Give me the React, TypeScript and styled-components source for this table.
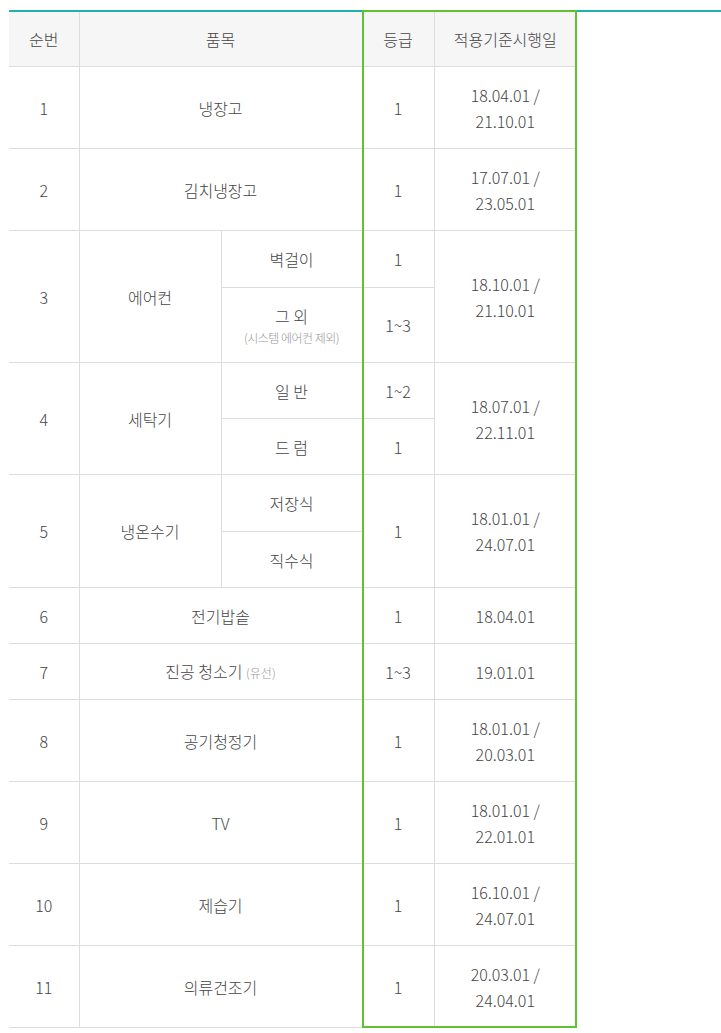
import React from "react";
import styled, { createGlobalStyle } from "styled-components";

const GlobalStyle = createGlobalStyle`
  body {
    margin: 0;
    background: #fff;
    font-family: "Noto Sans CJK KR", "Noto Sans", sans-serif;
  }
`;

const Wrapper = styled.div`
  position: relative;
  margin: 10px 0 0 9px;
  border-top: 2px solid #1db3ab;
`;

const Table = styled.table`
  width: 567px;
  border-collapse: collapse;
  table-layout: fixed;
  color: #454545;
  font-size: 16px;
  font-weight: 300;
  text-align: center;
`;

const Th = styled.th<{ $first?: boolean }>`
  height: 54px;
  padding: 0;
  background: #f6f6f6;
  font-weight: 300;
  border-bottom: 1px solid #ddd;
  border-left: ${(p) => (p.$first ? "none" : "1px solid #ddd")};
`;

const Td = styled.td<{ $h?: number; $first?: boolean }>`
  height: ${(p) => (p.$h ? p.$h - 1 + "px" : "auto")};
  padding: 0;
  line-height: 26px;
  border-bottom: 1px solid #ddd;
  border-left: ${(p) => (p.$first ? "none" : "1px solid #ddd")};
`;

const DateLine = styled.div`
  line-height: 26px;
`;

const Note = styled.span`
  display: block;
  font-size: 12px;
  line-height: 18px;
  color: #999;
  letter-spacing: -0.5px;
`;

const Small = styled.span`
  font-size: 12px;
  color: #999;
`;

const Highlight = styled.div`
  position: absolute;
  left: 353px;
  top: -2px;
  width: 215px;
  height: 1018px;
  box-sizing: border-box;
  border: 2.5px solid #5ec232;
  pointer-events: none;
`;

type Sub = { label: React.ReactNode; grade?: string; h: number; gradeSpan?: number };

type Row = {
  no: string;
  name: React.ReactNode;
  subs?: Sub[];
  grade?: string;
  date: string[];
  h: number;
};

const rows: Row[] = [
  { no: "1", name: "냉장고", grade: "1", date: ["18.04.01 /", "21.10.01"], h: 82 },
  { no: "2", name: "김치냉장고", grade: "1", date: ["17.07.01 /", "23.05.01"], h: 82 },
  {
    no: "3",
    name: "에어컨",
    date: ["18.10.01 /", "21.10.01"],
    h: 132,
    subs: [
      { label: "벽걸이", grade: "1", h: 57 },
      {
        label: (
          <>
            그 외
            <Note>(시스템 에어컨 제외)</Note>
          </>
        ),
        grade: "1~3",
        h: 75,
      },
    ],
  },
  {
    no: "4",
    name: "세탁기",
    date: ["18.07.01 /", "22.11.01"],
    h: 112,
    subs: [
      { label: "일 반", grade: "1~2", h: 56 },
      { label: "드 럼", grade: "1", h: 56 },
    ],
  },
  {
    no: "5",
    name: "냉온수기",
    date: ["18.01.01 /", "24.07.01"],
    h: 113,
    subs: [
      { label: "저장식", grade: "1", h: 57, gradeSpan: 2 },
      { label: "직수식", h: 56 },
    ],
  },
  { no: "6", name: "전기밥솥", grade: "1", date: ["18.04.01"], h: 56 },
  {
    no: "7",
    name: (
      <>
        진공 청소기 <Small>(유선)</Small>
      </>
    ),
    grade: "1~3",
    date: ["19.01.01"],
    h: 56,
  },
  { no: "8", name: "공기청정기", grade: "1", date: ["18.01.01 /", "20.03.01"], h: 82 },
  { no: "9", name: "TV", grade: "1", date: ["18.01.01 /", "22.01.01"], h: 82 },
  { no: "10", name: "제습기", grade: "1", date: ["16.10.01 /", "24.07.01"], h: 82 },
  { no: "11", name: "의류건조기", grade: "1", date: ["20.03.01 /", "24.04.01"], h: 82 },
];

export default function App() {
  return (
    <>
      <GlobalStyle />
      <Wrapper>
        <Table>
          <colgroup>
            <col style={{ width: 70 }} />
            <col style={{ width: 142 }} />
            <col style={{ width: 141 }} />
            <col style={{ width: 72 }} />
            <col style={{ width: 142 }} />
          </colgroup>
          <thead>
            <tr>
              <Th $first>순번</Th>
              <Th colSpan={2}>품목</Th>
              <Th>등급</Th>
              <Th>적용기준시행일</Th>
            </tr>
          </thead>
          <tbody>
            {rows.map((r) => {
              const dateCell = (span: number) => (
                <Td rowSpan={span}>
                  {r.date.map((d) => (
                    <DateLine key={d}>{d}</DateLine>
                  ))}
                </Td>
              );
              if (!r.subs) {
                return (
                  <tr key={r.no}>
                    <Td $first $h={r.h}>
                      {r.no}
                    </Td>
                    <Td colSpan={2}>{r.name}</Td>
                    <Td>{r.grade}</Td>
                    {dateCell(1)}
                  </tr>
                );
              }
              const n = r.subs.length;
              return r.subs.map((s, i) => (
                <tr key={r.no + "-" + i}>
                  {i === 0 && (
                    <Td $first rowSpan={n}>
                      {r.no}
                    </Td>
                  )}
                  {i === 0 && <Td rowSpan={n}>{r.name}</Td>}
                  <Td $h={s.h}>{s.label}</Td>
                  {s.grade && <Td rowSpan={s.gradeSpan || 1}>{s.grade}</Td>}
                  {i === 0 && dateCell(n)}
                </tr>
              ));
            })}
          </tbody>
        </Table>
        <Highlight />
      </Wrapper>
    </>
  );
}
